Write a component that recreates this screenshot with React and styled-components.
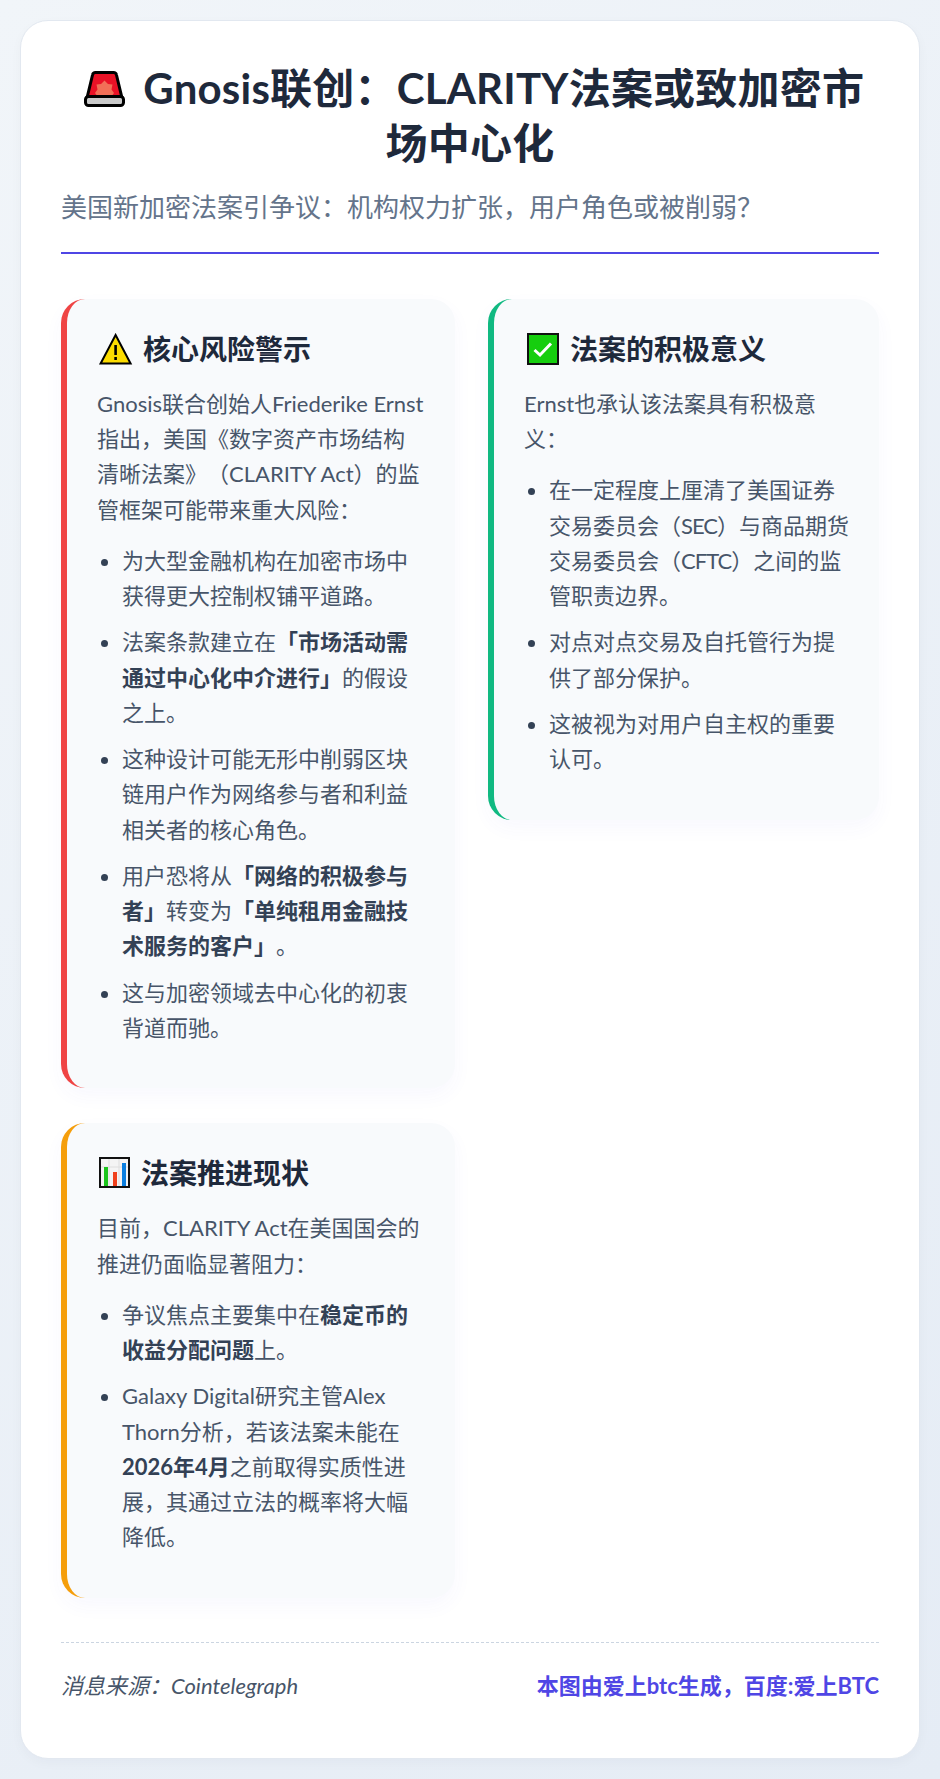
import React from 'react'
import styled, { createGlobalStyle } from 'styled-components'

const GlobalStyle = createGlobalStyle`
    * {
        box-sizing: border-box;
    }

    body {
        margin: 0;
        padding: 20px;
        background: linear-gradient(135deg, #f1f5f9 0%, #e5ecf5 100%);
        font-family: Lato, 'Noto Sans CJK SC', sans-serif;
        text-spacing-trim: space-all;
        color: #334155;
    }
`

function SirenIcon() {
    return (
        <TitleIcon viewBox="0 0 41 36">
            <path d="M8.5 4 Q9 1.5 11.5 1.5 H29.5 Q32 1.5 32.5 4 L38 27 H3 Z" fill="#ea1226" stroke="#000" strokeWidth="3" />
            <path d="M20.5 9.5 L24 13 L28.5 13.5 L27.5 18.5 L30 22 L27 26 H14 L11 22 L13.5 18.5 L12.5 13.5 L17 13 Z" fill="#f26f57" />
            <rect x="1.5" y="25.5" width="38" height="9" rx="3" fill="#c9c9c9" stroke="#000" strokeWidth="3" />
        </TitleIcon>
    )
}

function WarningIcon() {
    return (
        <HeadIcon viewBox="0 0 38 32" width="38" height="32">
            <path d="M18.6 2 L33.6 30.5 H3.6 Z" fill="#fcdc00" stroke="#000" strokeWidth="2" />
            <rect x="17.3" y="12" width="2.6" height="10" fill="#000" />
            <rect x="17.3" y="24" width="2.6" height="3" fill="#000" />
        </HeadIcon>
    )
}

function CheckIcon() {
    return (
        <HeadIcon viewBox="0 0 38 32" width="38" height="32">
            <rect x="4" y="1" width="30" height="30" fill="#16ce0e" stroke="#111" strokeWidth="2" />
            <path d="M10.5 17 L16 22 L27 10.5" fill="none" stroke="#fff" strokeWidth="3" />
        </HeadIcon>
    )
}

function ChartIcon() {
    return (
        <HeadIcon viewBox="0 0 36 32" width="36" height="32">
            <rect x="3" y="1" width="29" height="29" fill="#f4f4f4" stroke="#111" strokeWidth="2" />
            <path d="M12 2 V29 M22 2 V29 M4 10 H31" stroke="#dedede" strokeWidth="1" />
            <rect x="7" y="10" width="4" height="19" fill="#1cc51c" />
            <rect x="16" y="15" width="4" height="14" fill="#f0401c" />
            <rect x="25" y="6" width="4" height="23" fill="#0b7fe0" />
        </HeadIcon>
    )
}

export default function App() {
    return (
        <>
            <GlobalStyle />
            <Page>
                <Header>
                    <Title><SirenIcon /> Gnosis联创：CLARITY法案或致加密市场中心化</Title>
                    <Subtitle>美国新加密法案引争议：机构权力扩张，用户角色或被削弱？</Subtitle>
                </Header>

                <Columns>
                    <Column>
                        <Section $accent="#ef4444">
                            <SectionTitle><WarningIcon />核心风险警示</SectionTitle>
                            <Text>Gnosis联合创始人Friederike Ernst指出，美国《数字资产市场结构清晰法案》（CLARITY Act）的监管框架可能带来重大风险：</Text>
                            <List>
                                <li>为大型金融机构在加密市场中获得更大控制权铺平道路。</li>
                                <li>法案条款建立在<strong>「市场活动需通过中心化中介进行」</strong>的假设之上。</li>
                                <li>这种设计可能无形中削弱区块链用户作为网络参与者和利益相关者的核心角色。</li>
                                <li>用户恐将从<strong>「网络的积极参与者」</strong>转变为<strong>「单纯租用金融技术服务的客户」</strong>。</li>
                                <li>这与加密领域去中心化的初衷背道而驰。</li>
                            </List>
                        </Section>

                        <Section $accent="#f59e0b">
                            <SectionTitle><ChartIcon />法案推进现状</SectionTitle>
                            <Text>目前，CLARITY Act在美国国会的推进仍面临显著阻力：</Text>
                            <List>
                                <li>争议焦点主要集中在<strong>稳定币的收益分配问题</strong>上。</li>
                                <li>Galaxy Digital研究主管Alex Thorn分析，若该法案未能在<strong>2026年4月</strong>之前取得实质性进展，其通过立法的概率将大幅降低。</li>
                            </List>
                        </Section>
                    </Column>

                    <Column>
                        <Section $accent="#10b981">
                            <SectionTitle><CheckIcon />法案的积极意义</SectionTitle>
                            <Text>Ernst也承认该法案具有积极意义：</Text>
                            <List $tight>
                                <li>在一定程度上厘清了美国证券交易委员会（<Abbr>SEC</Abbr>）与商品期货交易委员会（<Abbr>CFTC</Abbr>）之间的监管职责边界。</li>
                                <li>对点对点交易及自托管行为提供了部分保护。</li>
                                <li>这被视为对用户自主权的重要认可。</li>
                            </List>
                        </Section>
                    </Column>
                </Columns>

                <Footer>
                    <Source>消息来源：Cointelegraph</Source>
                    <Credit>本图由爱上btc生成，百度:爱上BTC</Credit>
                </Footer>
            </Page>
        </>
    )
}


const Page = styled.main`
    width: 900px;
    height: 1739px;
    padding: 40px;
    background: #fff;
    border: 1px solid #e2e8f0;
    border-radius: 28px;
    box-shadow: 0 4px 12px rgba(30, 41, 59, 0.03);
`

const Header = styled.header`
    padding-bottom: 24px;
    border-bottom: 2px solid #4f46e5;
`

const Title = styled.h1`
    margin: 0 0 15px;
    padding: 0 10px;
    font-size: 42px;
    line-height: 55px;
    font-weight: 700;
    letter-spacing: 0.2px;
    color: #1e293b;
    text-align: center;
`

const TitleIcon = styled.svg`
    width: 41px;
    height: 36px;
    vertical-align: -3px;
    margin: 0 8px;
`

const Subtitle = styled.p`
    margin: 0;
    font-size: 26px;
    line-height: 42px;
    color: #64748b;
`

const Columns = styled.div`
    display: grid;
    grid-template-columns: 394px 391px;
    gap: 33px;
    margin-top: 45px;
`

const Column = styled.div`
    display: flex;
    flex-direction: column;
    gap: 35px;
    align-items: stretch;
`

const Section = styled.section`
    padding: 32px 30px 32px;
    background: #f8fafc;
    border-left: 6px solid ${(props) => props.$accent};
    border-radius: 24px;
    box-shadow: 0 8px 20px rgba(79, 70, 229, 0.04);
`

const SectionTitle = styled.h2`
    display: flex;
    align-items: center;
    gap: 8px;
    margin: 0 0 19px;
    font-size: 28px;
    line-height: 36px;
    font-weight: 700;
    color: #1e293b;
`

const HeadIcon = styled.svg`
    flex: none;
`

const Text = styled.p`
    margin: 0 0 16px;
    font-size: 22px;
    line-height: 35.2px;
    color: #475569;
`

const List = styled.ul`
    margin: 0 ${(props) => (props.$tight ? '-6px' : '0')} 0 0;
    padding-left: 25px;
    font-size: 22px;
    line-height: 35.2px;
    color: #475569;

    li {
        margin-bottom: 11.2px;
    }

    li::marker {
        color: #334155;
    }

    strong {
        font-weight: 700;
        color: #334155;
    }
`

const Abbr = styled.span`
    letter-spacing: -1px;
`

const Footer = styled.footer`
    display: flex;
    justify-content: space-between;
    align-items: center;
    margin-top: 44px;
    padding-top: 28px;
    border-top: 1px dashed #cbd5e1;
    font-size: 22px;
    line-height: 30px;
`

const Source = styled.span`
    font-style: italic;
    color: #475569;
`

const Credit = styled.span`
    font-weight: 700;
    color: #4f46e5;
`
